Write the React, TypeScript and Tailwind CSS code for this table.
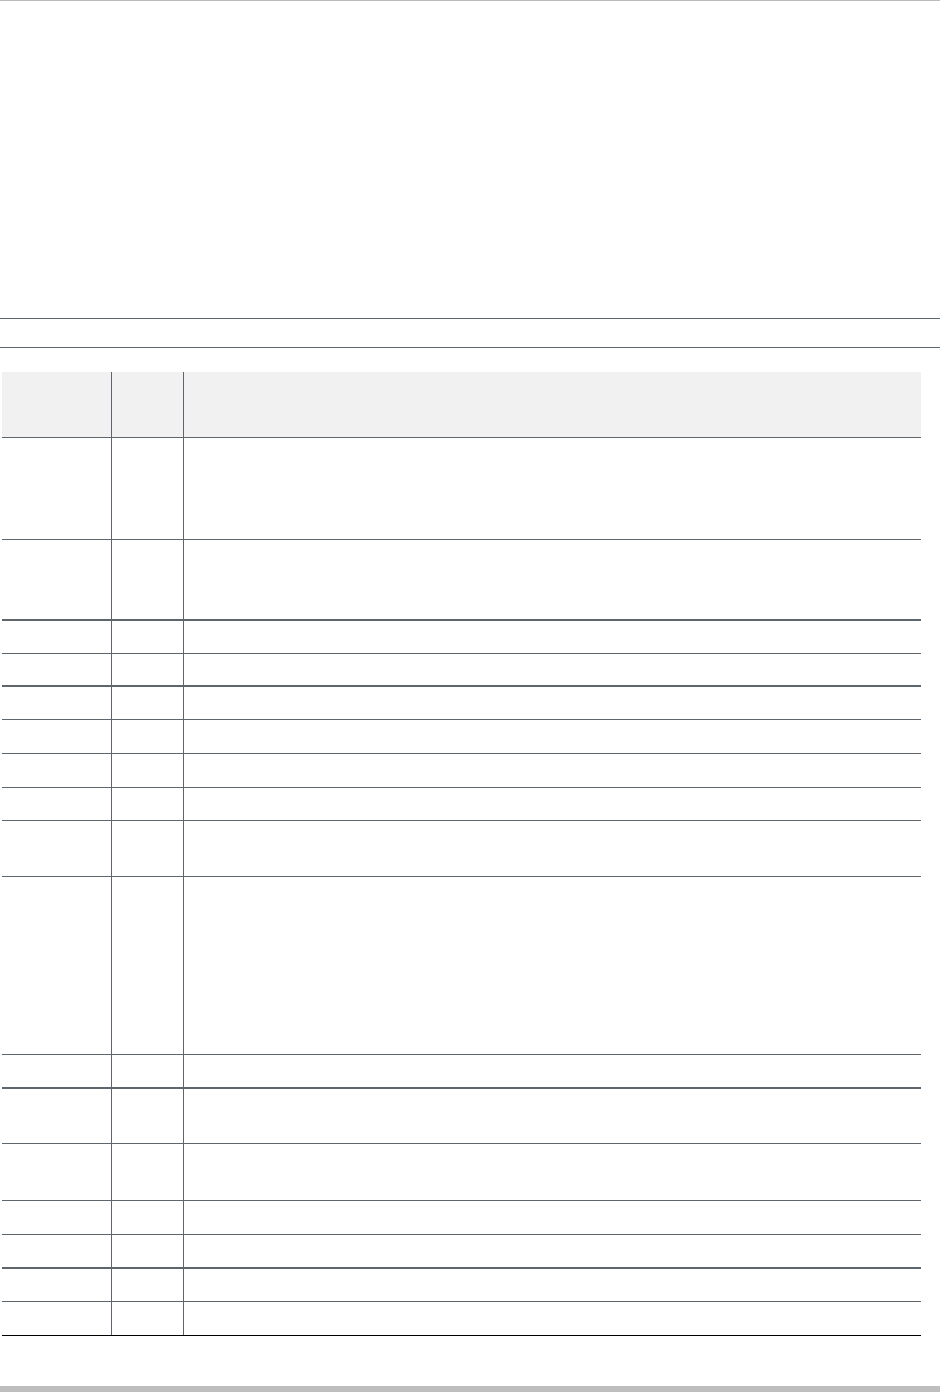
const ROWS: { h: number; thick?: boolean; last?: boolean }[] = [
  { h: 102 },
  { h: 81, thick: true },
  { h: 33 },
  { h: 33, thick: true },
  { h: 33 },
  { h: 34 },
  { h: 34 },
  { h: 33 },
  { h: 56 },
  { h: 178 },
  { h: 34, thick: true },
  { h: 55 },
  { h: 57 },
  { h: 34 },
  { h: 34, thick: true },
  { h: 33 },
  { h: 34, last: true },
];

function Row({ h, thick, last }: { h: number; thick?: boolean; last?: boolean }) {
  const border = last
    ? 'border-b border-black'
    : thick
      ? 'border-b-2 border-[#5d666d]'
      : 'border-b border-[#5d666d]';
  return (
    <div className={`flex ${border}`} style={{ height: h }}>
      <div className="w-[110px] shrink-0 border-r border-[#5d666d]" />
      <div className="w-[72px] shrink-0 border-r border-[#5d666d]" />
      <div className="flex-1" />
    </div>
  );
}

export default function App() {
  return (
    <div className="w-[940px] h-[1392px] bg-white flex flex-col font-['Liberation_Sans',sans-serif]">
      <div className="h-[318px] shrink-0 border-t border-[#bcbcbc]" />
      <div className="h-[29px] shrink-0 border-t border-[#5d666d]" />
      <div className="h-[25px] shrink-0 border-t border-[#5d666d]" />

      <div className="ml-[2px] w-[919px] flex flex-col">
        <div className="flex h-[66px] bg-[#f1f1f1] border-b border-[#5d666d]">
          <div className="w-[110px] shrink-0 border-r border-[#5d666d]" />
          <div className="w-[72px] shrink-0 border-r border-[#5d666d]" />
          <div className="flex-1" />
        </div>
        {ROWS.map((r, i) => (
          <Row key={i} {...r} />
        ))}
      </div>

      <div className="flex-1" />
      <div className="h-[6px] shrink-0 bg-[#bebebe]" />
    </div>
  );
}
